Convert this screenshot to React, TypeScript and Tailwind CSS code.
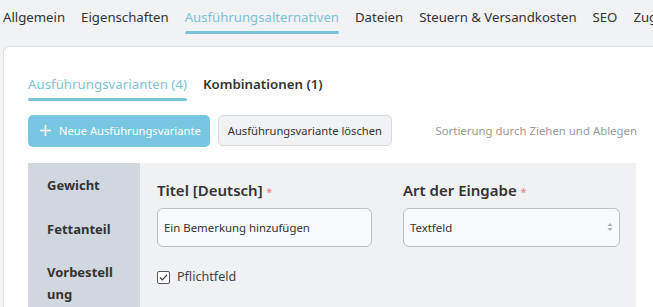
import React from "react"

const navItems = [
  "Allgemein",
  "Eigenschaften",
  "Ausführungsalternativen",
  "Dateien",
  "Steuern & Versandkosten",
  "SEO",
  "Zugriff",
]

function Required() {
  return <span className="ml-1 text-[10px] text-[#e58c8c] align-middle">*</span>
}

export default function App() {
  return (
    <div className="h-[307px] w-[653px] overflow-hidden bg-[#f1f2f4] font-['Noto_Sans',sans-serif] text-[#333]">
      {/* top tabs */}
      <nav className="flex h-[46px] gap-4 whitespace-nowrap pl-[3px] pt-[8px] text-[13.2px]">
        {navItems.map((item) => (
          <div key={item} className="flex flex-col">
            <span
              className={
                item === "Ausführungsalternativen" ? "text-[#7cc3d5]" : "text-[#333]"
              }
            >
              {item}
            </span>
            {item === "Ausführungsalternativen" && (
              <span className="mt-[3px] h-[3px] rounded-full bg-[#7cc3d5]" />
            )}
          </div>
        ))}
      </nav>

      {/* panel */}
      <div className="ml-[3px] h-[261px] rounded-tl-md border-l border-t border-[#dcdfe3] bg-white pl-[24px]">
        <div className="flex gap-4 whitespace-nowrap pt-[28px] text-[13.3px]">
          <div className="flex flex-col">
            <span className="text-[#7cc3d5]">Ausführungsvarianten (4)</span>
            <span className="mt-[3px] h-[3px] rounded-full bg-[#7cc3d5]" />
          </div>
          <span className="font-semibold text-[#333]">Kombinationen (1)</span>
        </div>

        <div className="mt-[14px] flex items-center whitespace-nowrap">
          <button className="flex h-[32px] items-center gap-[7px] rounded-[5px] bg-[#78c6e2] pl-[11px] pr-[9px] text-[11.2px] text-white">
            <svg width="13" height="13" viewBox="0 0 13 13">
              <path d="M6.5 1v11M1 6.5h11" stroke="white" strokeWidth="1.6" />
            </svg>
            Neue Ausführungsvariante
          </button>
          <button className="ml-[8px] h-[31px] rounded-[5px] border border-[#d5d8dc] bg-[#f1f2f4] px-[9px] text-[11.2px] text-[#333]">
            Ausführungsvariante löschen
          </button>
          <span className="ml-auto mr-[16px] text-[11.4px] text-[#999]">
            Sortierung durch Ziehen und Ablegen
          </span>
        </div>

        <div className="mt-[16px] flex h-[145px] w-[608px]">
          <div className="w-[112px] shrink-0 bg-[#d1d7de] pl-[19px] pr-[22px] pt-[11px] text-[13px] font-bold leading-[22px] text-[#333]">
            <div className="break-all">Gewicht</div>
            <div className="mt-[22px] break-all">Fettanteil</div>
            <div className="mt-[21px] break-all">Vorbestellung</div>
          </div>
          <div className="flex-1 bg-[#f0f1f3] pl-[17px] pt-[16px]">
            <div className="flex gap-[31px]">
              <div className="w-[215px]">
                <div className="text-[15px] font-semibold leading-[22px]">
                  Titel [Deutsch]
                  <Required />
                </div>
                <div className="mt-[5px] flex h-[39px] items-center rounded-[6px] border border-[#b9bfc7] bg-[#f8f9fa] px-[6px] text-[11.4px]">
                  Ein Bemerkung hinzufügen
                </div>
              </div>
              <div className="w-[217px]">
                <div className="text-[15px] font-semibold leading-[22px]">
                  Art der Eingabe
                  <Required />
                </div>
                <div className="mt-[5px] flex h-[39px] items-center justify-between rounded-[6px] border border-[#b9bfc7] bg-[#f8f9fa] pl-[6px] pr-[6px] text-[11.4px]">
                  Textfeld
                  <svg width="6" height="10" viewBox="0 0 6 10">
                    <path d="M0.5 4L3 1l2.5 3z M0.5 6L3 9l2.5-3z" fill="#aab0b8" />
                  </svg>
                </div>
              </div>
            </div>
            <div className="mt-[21px] flex items-center gap-[7px] text-[12.6px] text-[#444]">
              <svg width="13" height="13" viewBox="0 0 13 13">
                <rect x="0.5" y="0.5" width="12" height="12" rx="1.5" fill="white" stroke="#555" />
                <path d="M3 6.5l2.3 2.3L10 3.8" stroke="#333" strokeWidth="1.2" fill="none" />
              </svg>
              Pflichtfeld
            </div>
          </div>
        </div>
      </div>
    </div>
  )
}
